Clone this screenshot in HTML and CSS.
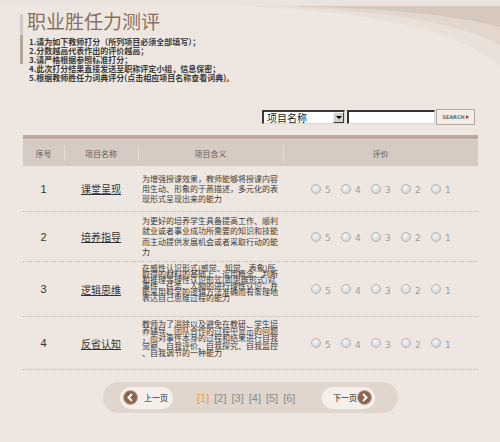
FILE: index.html
```html
<!DOCTYPE html>
<html lang="zh-CN">
<head>
<meta charset="utf-8">
<title>职业胜任力测评</title>
<link rel="stylesheet" href="styles.css">
</head>
<body>
<svg class="deco" width="500" height="70" viewBox="0 0 500 70" aria-hidden="true">
  <rect x="0" y="0" width="500" height="6" fill="#ebe4de"/>
  <path d="M240,6 L500,6 L500,66 Q440,14 240,6 Z" fill="#e9e0d9"/>
  <path d="M270,6 L500,6 L500,45 Q440,12 270,6 Z" fill="#e2d6cd"/>
  <path d="M290,6 L500,6 L500,27 Q430,9 290,6 Z" fill="#d7c8bd"/>
</svg>
<div class="page">
  <header class="intro">
    <div class="intro-bar"></div>
    <div class="intro-text">
      <h1 class="title">职业胜任力测评</h1>
      <ul class="notes">
        <li>1.请为如下教师打分（所列项目必须全部填写）；</li>
        <li>2.分数越高代表作出的评价越高；</li>
        <li>3.请严格根据参照标准打分；</li>
        <li>4.此次打分结果直接发送至职称评定小组，信息保密；</li>
        <li>5.根据教师胜任力词典评分(点击相应项目名称查看词典)。</li>
      </ul>
    </div>
  </header>

  <div class="search">
    <div class="sel"><span class="sel-text">项目名称</span><span class="sel-arrow"><span class="tri"></span></span></div>
    <div class="inp"></div>
    <div class="btn">SEARCH<span class="btn-tri"></span></div>
  </div>

  <div class="grid">
    <div class="head">
      <div class="hc">序号</div>
      <div class="hc">项目名称</div>
      <div class="hc">项目含义</div>
      <div class="hc">评价</div>
    </div>

    <div class="row r1">
      <div class="num">1</div>
      <div class="name"><a href="#">课堂呈现</a></div>
      <div class="desc">为增强授课效果，教师能够将授课内容<br>用生动、形象的于燕描述，多元化的表<br>现形式呈现出来的能力</div>
      <div class="rate">
        <span class="opt"><span class="radio"></span><span class="lbl">5</span></span>
        <span class="opt"><span class="radio"></span><span class="lbl">4</span></span>
        <span class="opt"><span class="radio"></span><span class="lbl">3</span></span>
        <span class="opt"><span class="radio"></span><span class="lbl">2</span></span>
        <span class="opt"><span class="radio"></span><span class="lbl">1</span></span>
      </div>
    </div>

    <div class="row r2">
      <div class="num">2</div>
      <div class="name"><a href="#">培养指导</a></div>
      <div class="desc">为更好的培养学生具备提高工作、顺利<br>就业或者事业成功所需要的知识和技能<br>而主动提供发展机会或者采取行动的能<br>力</div>
      <div class="rate">
        <span class="opt"><span class="radio"></span><span class="lbl">5</span></span>
        <span class="opt"><span class="radio"></span><span class="lbl">4</span></span>
        <span class="opt"><span class="radio"></span><span class="lbl">3</span></span>
        <span class="opt"><span class="radio"></span><span class="lbl">2</span></span>
        <span class="opt"><span class="radio"></span><span class="lbl">1</span></span>
      </div>
    </div>

    <div class="row r3">
      <div class="num">3</div>
      <div class="name"><a href="#">逻辑思维</a></div>
      <div class="desc">在感性认识形式(感觉、知觉、表象)所<br>取得的材料的基础上，运用概念、判断<br>和推理等理性认识形式(即思维形式)对<br>事件、任务、人物的进行理性认识，并<br>能采用科学的逻辑方法准确而有条理地<br>表达自己思维过程的能力</div>
      <div class="rate">
        <span class="opt"><span class="radio"></span><span class="lbl">5</span></span>
        <span class="opt"><span class="radio"></span><span class="lbl">4</span></span>
        <span class="opt"><span class="radio"></span><span class="lbl">3</span></span>
        <span class="opt"><span class="radio"></span><span class="lbl">2</span></span>
        <span class="opt"><span class="radio"></span><span class="lbl">1</span></span>
      </div>
    </div>

    <div class="row r4">
      <div class="num">4</div>
      <div class="name"><a href="#">反省认知</a></div>
      <div class="desc">教师为了消除以及避免在教研、学生培<br>养辅导、团队合作的过程中显示的问题<br>，而对事件本身的过程和结果进行自我<br>觉察、自我评价、自我探究、自我监控<br>、自我调节的一种能力</div>
      <div class="rate">
        <span class="opt"><span class="radio"></span><span class="lbl">5</span></span>
        <span class="opt"><span class="radio"></span><span class="lbl">4</span></span>
        <span class="opt"><span class="radio"></span><span class="lbl">3</span></span>
        <span class="opt"><span class="radio"></span><span class="lbl">2</span></span>
        <span class="opt"><span class="radio"></span><span class="lbl">1</span></span>
      </div>
    </div>
  </div>

  <nav class="pager">
    <a class="pbtn prev" href="#">
      <svg class="picon" width="15" height="15" viewBox="0 0 15 15"><circle cx="7.5" cy="7.5" r="7" fill="#8b644e" stroke="#c4ab9b" stroke-width="1"/><polyline points="9,4 5.5,7.5 9,11" fill="none" stroke="#fff" stroke-width="2"/></svg>
      <span>上一页</span>
    </a>
    <div class="pages">
      <a class="cur" href="#">[1]</a>
      <a href="#">[2]</a>
      <a href="#">[3]</a>
      <a href="#">[4]</a>
      <a href="#">[5]</a>
      <a href="#">[6]</a>
    </div>
    <a class="pbtn next" href="#">
      <span>下一页</span>
      <svg class="picon nicon" width="15" height="15" viewBox="0 0 15 15"><circle cx="7.5" cy="7.5" r="7" fill="#8b644e" stroke="#c4ab9b" stroke-width="1"/><polyline points="6,4 9.5,7.5 6,11" fill="none" stroke="#fff" stroke-width="2"/></svg>
    </a>
  </nav>
</div>
</body>
</html>
```
FILE: styles.css
```css
* { box-sizing: border-box; margin: 0; padding: 0; }
html, body { width: 500px; height: 442px; overflow: hidden; }
body {
  background: #eee7e1;
  font-family: "Liberation Sans", "Noto Sans CJK SC", sans-serif;
  color: #333;
  position: relative;
}
a { color: inherit; text-decoration: none; }

.deco { position: absolute; top: 0; left: 0; z-index: 0; display: block; }
.page { position: relative; z-index: 1; }

/* intro */
.intro { height: 109px; display: flex; padding: 10px 0 0 20px; gap: 4px; }
.intro-bar {
  width: 3px; height: 50px; margin-top: 4px;
  background: linear-gradient(#d4c9c1 0, #d4c9c1 42%, #b6a79d 42%, #b6a79d 100%);
}
.title {
  font-family: "Noto Sans CJK SC", sans-serif;
  font-size: 19px; line-height: 22px; font-weight: normal; color: #8a6f60;
}
.notes {
  list-style: none; margin-top: 5px; padding-left: 2px;
  font-family: "Noto Sans CJK SC", sans-serif;
  font-size: 8px; line-height: 9px; font-weight: bold; color: #3a3a3a;
}

/* search */
.search { display: flex; justify-content: flex-end; align-items: center; padding-right: 25px; height: 16px; }
.sel {
  width: 83px; height: 14px; margin-right: 2px; background: #fff;
  border-style: solid; border-width: 2px 1px 1px 2px; border-color: #3a3a3a #d8d8d8 #d8d8d8 #3a3a3a;
  display: flex; align-items: center;
}
.sel-text { flex: 1; padding-left: 3px; font-family: "Noto Sans CJK SC", sans-serif; font-size: 10px; line-height: 11px; color: #222; }
.sel-arrow {
  width: 11px; height: 11px; background: #d4d0c8;
  border-style: solid; border-width: 1px; border-color: #f4f4f4 #404040 #404040 #f4f4f4;
  display: flex; align-items: center; justify-content: center;
}
.tri { width: 0; height: 0; border-left: 3px solid transparent; border-right: 3px solid transparent; border-top: 3px solid #000; }
.inp {
  width: 88px; height: 14px; background: #fff; margin-right: 1px;
  border-style: solid; border-width: 2px 1px 1px 2px; border-color: #333 #d8d8d8 #d8d8d8 #333;
}
.btn {
  width: 39px; height: 16px; background: #f3ede8; border: 1px solid #b8a79b;
  display: flex; align-items: center; justify-content: center; gap: 1px;
  font-family: "DejaVu Sans", sans-serif; font-size: 5px; font-weight: bold; color: #6e6e6e;
}
.btn-tri { width: 0; height: 0; border-top: 2px solid transparent; border-bottom: 2px solid transparent; border-left: 3px solid #d42a1e; }

/* grid */
.grid { margin: 10px 0 0 23px; width: 455px; border-top: 4px solid #bcaa9f; }
.head, .row { display: grid; grid-template-columns: 41px 74px 145px 195px; align-items: center; }
.head { height: 27px; background: #d6cbc2; border-top: 1px solid #e0d6ce; }
.hc {
  height: 100%; display: flex; align-items: center; justify-content: center;
  font-family: "Noto Sans CJK SC", sans-serif; font-size: 8px; color: #665750;
}
.hc + .hc { background: linear-gradient(#e7dfd8, #e7dfd8) left center / 1px 16px no-repeat; }

.row { border-bottom: 1px dotted #c3b6ac; }
.r1 { height: 46px; }
.r2 { height: 50px; }
.r3 { height: 55px; }
.r4 { height: 53px; }
.num { text-align: center; font-size: 11px; color: #333; }
.name { text-align: center; font-family: "Noto Sans CJK SC", sans-serif; font-size: 10px; }
.name a { color: #333; text-decoration: underline; }
.desc { font-family: "Noto Sans CJK SC", sans-serif; font-size: 8px; padding-left: 4px; white-space: nowrap; color: #3a3a3a; }
.r1 .desc { line-height: 10px; }
.r2 .desc { line-height: 10.5px; }
.r3 .desc { line-height: 6px; padding-bottom: 12px; }
.r4 .desc { line-height: 7.3px; padding-bottom: 10px; }

.rate { display: flex; justify-content: center; gap: 11px; }
.opt { display: flex; align-items: center; gap: 4px; }
.radio {
  width: 10px; height: 10px; border-radius: 50%; border: 1px solid #b4b4b4;
  background: radial-gradient(circle at 40% 35%, #f6f6f6 0, #dcdcdc 60%, #cfcfcf 100%);
}
.lbl { width: 5px; font-family: "DejaVu Sans", sans-serif; font-size: 9px; line-height: 10px; color: #9b9b9b; padding-top: 3px; }

/* pager */
.pager {
  margin: 12px 0 0 103px; width: 295px; height: 31px; border-radius: 16px;
  background: #e1d6cd; display: flex; align-items: center; padding: 0 23px 0 17px;
}
.pbtn {
  height: 22px; width: 53px; border-radius: 11px; background: #f4efeb;
  display: flex; align-items: center;
  font-family: "Noto Sans CJK SC", sans-serif; font-size: 8px; color: #222;
}
.prev { padding-left: 3px; gap: 6px; }
.next { padding-left: 11px; margin-left: auto; }
.picon { display: block; flex: none; }
.pages { display: flex; gap: 5px; margin-left: 24px; font-size: 11px; color: #8b8b8b; }
.pages .cur { color: #f39a2b; }
```
